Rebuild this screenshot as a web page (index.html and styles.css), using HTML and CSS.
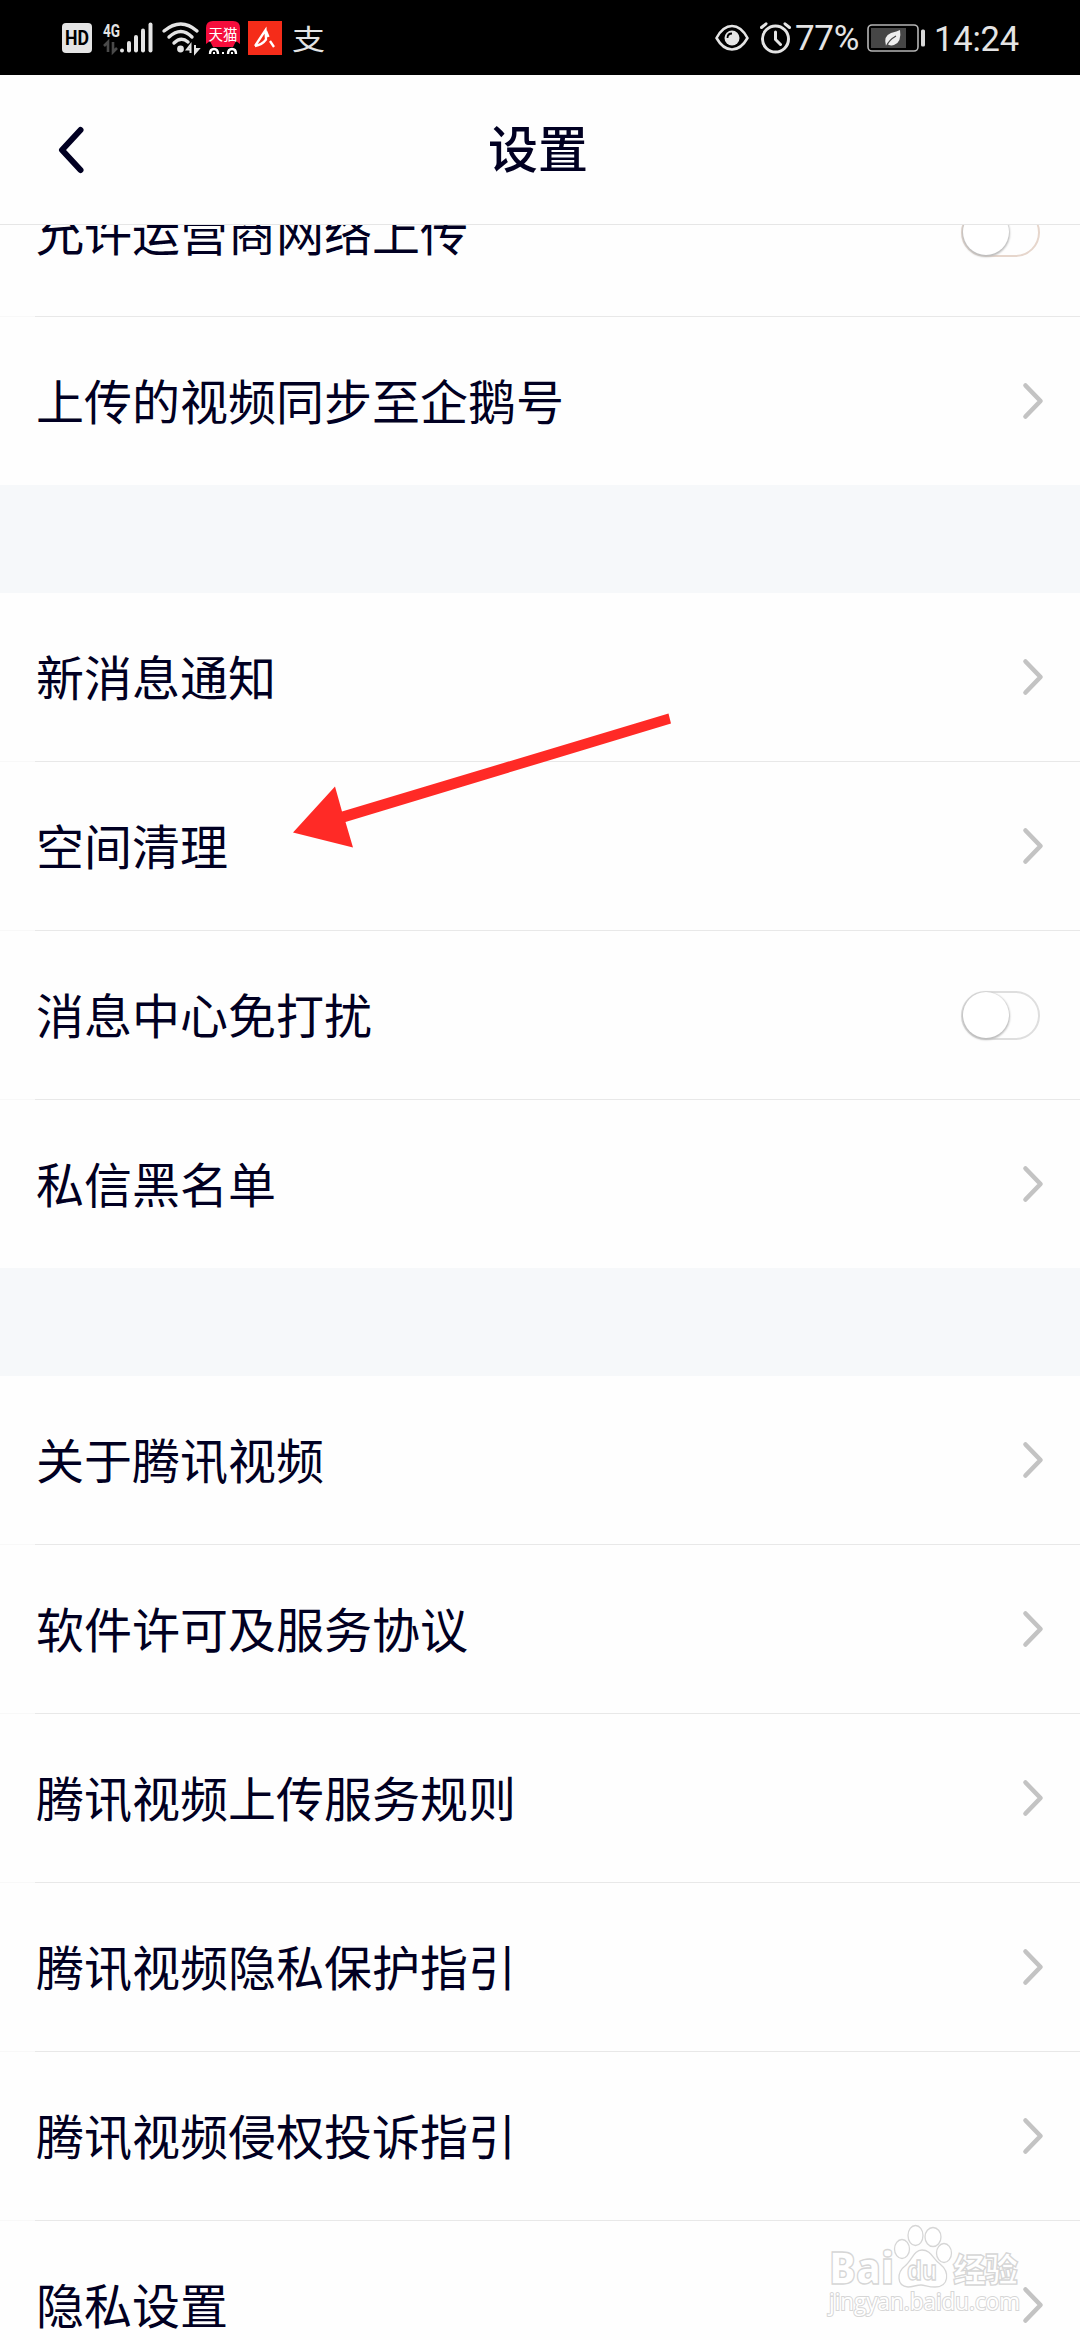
FILE: index.html
```html
<!DOCTYPE html>
<html lang="zh-CN">
<head>
    <meta charset="UTF-8">
    <meta name="viewport" content="width=device-width, initial-scale=1.0">
    <title>设置</title>
    <link rel="stylesheet" href="styles.css">
</head>
<body>
    <svg class="symbols" width="0" height="0">
        <symbol id="chevron" viewBox="0 0 22 38">
            <path d="M3.5 3.5 L18.5 19 L3.5 34.5" fill="none" stroke="#c3c3c3" stroke-width="4.6" stroke-linecap="round" stroke-linejoin="round"/>
        </symbol>
    </svg>

    <div class="status-bar">
        <div class="status-left">
            <svg class="icon-hd" width="30" height="30" viewBox="0 0 30 30">
                <rect width="30" height="30" rx="4" fill="#e4e4e4"/>
                <text x="3" y="22" textLength="24" lengthAdjust="spacingAndGlyphs" class="hd-text">HD</text>
            </svg>
            <svg class="icon-signal" width="50" height="32" viewBox="0 0 50 32">
                <text x="0" y="14.5" textLength="17" lengthAdjust="spacingAndGlyphs" class="net-text">4G</text>
                <path d="M5 30 V20 L1 24 M10 20 V30 L14 26" fill="none" stroke="#4a4a4a" stroke-width="2.6"/>
                <g stroke="#e4e4e4" stroke-width="4" stroke-linecap="round">
                    <path d="M19 28.5 V28.6"/>
                    <path d="M26 21 V28.5"/>
                    <path d="M33 15 V28.5"/>
                    <path d="M40 8.5 V28.5"/>
                    <path d="M47.5 2.5 V28.5"/>
                </g>
            </svg>
            <svg class="icon-wifi" width="38" height="32" viewBox="0 0 38 32">
                <g fill="none" stroke="#e4e4e4" stroke-width="3.4" stroke-linecap="round">
                    <path d="M2 9 Q19 -5 35 9"/>
                    <path d="M7 15 Q19 4 30 15"/>
                    <path d="M12 21 Q19 14 26 20"/>
                </g>
                <circle cx="18.5" cy="27" r="3.4" fill="#e4e4e4"/>
                <path d="M28.5 31 V23 L25 27.5 H28 M33 23 V31 L36.5 27 H33.5" fill="none" stroke="#e4e4e4" stroke-width="2"/>
            </svg>
            <svg class="icon-tmall" width="34" height="34" viewBox="0 0 34 34">
                <path d="M7 0 H27 Q34 0 34 7 V23 L30 20 L27 26 H7 L4 20 L0 23 V7 Q0 0 7 0 Z" fill="#f50d3c"/>
                <text x="2.5" y="18.5" textLength="29" class="tmall-text">天猫</text>
                <path d="M4 33 Q4 28 8 28 Q12 28 12 33 M22 33 Q22 28 26 28 Q30 28 30 33" fill="none" stroke="#fff" stroke-width="2.4"/>
                <path d="M8 31 V33 M26 31 V33 M17 31 V33" stroke="#fff" stroke-width="2"/>
            </svg>
            <svg class="icon-app" width="34" height="34" viewBox="0 0 34 34">
                <rect width="34" height="34" fill="#f52c19"/>
                <path d="M7 25 L17.5 9 L18 18.5 Q14 24 7 25 M18 10 L20.5 16 M22 20 L26 26" fill="none" stroke="#fff" stroke-width="2.3"/>
            </svg>
            <span class="icon-pay">支</span>
        </div>
        <div class="status-right">
            <svg class="icon-eye" width="34" height="28" viewBox="0 0 34 28">
                <path d="M1.5 14 Q8 2 17 2 Q26 2 32.5 14 Q26 25.5 17 25.5 Q8 25.5 1.5 14 Z" fill="none" stroke="#e4e4e4" stroke-width="2.6" stroke-linejoin="round"/>
                <circle cx="17" cy="14" r="7.5" fill="#e4e4e4"/>
                <path d="M12.5 14 Q12.5 9.5 17 9.5" fill="none" stroke="#000" stroke-width="1.8"/>
            </svg>
            <svg class="icon-alarm" width="31" height="32" viewBox="0 0 31 32">
                <circle cx="15.5" cy="17" r="13" fill="none" stroke="#e4e4e4" stroke-width="3"/>
                <path d="M1.5 5.5 L6 1.8 M25 1.8 L29.5 5.5 M15.5 10 V17.5 L20.5 22.5" fill="none" stroke="#e4e4e4" stroke-width="3" stroke-linecap="round"/>
            </svg>
            <span class="battery-text">77%</span>
            <svg class="icon-battery" width="58" height="28" viewBox="0 0 58 28">
                <rect x="1" y="1" width="50" height="26" rx="4" fill="none" stroke="#b5b5b5" stroke-width="1.6"/>
                <rect x="4" y="4" width="35" height="20" fill="#464646"/>
                <path d="M19 22 Q16 12 24 9 Q30 7.5 33 6 Q35 18 27 21 Q24 22 21 20.5 Z" fill="#eee"/>
                <path d="M19.5 22 Q22 16 29 12" fill="none" stroke="#464646" stroke-width="1.2"/>
                <rect x="54" y="5.5" width="4" height="17" rx="1.5" fill="#d8d8d8"/>
            </svg>
            <span class="clock">14:24</span>
        </div>
    </div>

    <header class="header">
        <svg class="back" width="30" height="50" viewBox="0 0 30 50">
            <path d="M24.5 5 L6 25 L24.5 45" fill="none" stroke="#010022" stroke-width="6" stroke-linecap="round" stroke-linejoin="round"/>
        </svg>
        <h1>设置</h1>
    </header>

    <main class="list">
        <section class="group group-scrolled">
            <div class="row"><span>允许运营商网络上传</span><div class="toggle toggle-warm"><i></i></div></div>
            <div class="row"><span>上传的视频同步至企鹅号</span><svg class="arrow"><use href="#chevron"/></svg></div>
        </section>

        <section class="group">
            <div class="row"><span>新消息通知</span><svg class="arrow"><use href="#chevron"/></svg></div>
            <div class="row"><span>空间清理</span><svg class="arrow"><use href="#chevron"/></svg></div>
            <div class="row"><span>消息中心免打扰</span><div class="toggle"><i></i></div></div>
            <div class="row"><span>私信黑名单</span><svg class="arrow"><use href="#chevron"/></svg></div>
        </section>

        <section class="group">
            <div class="row"><span>关于腾讯视频</span><svg class="arrow"><use href="#chevron"/></svg></div>
            <div class="row"><span>软件许可及服务协议</span><svg class="arrow"><use href="#chevron"/></svg></div>
            <div class="row"><span>腾讯视频上传服务规则</span><svg class="arrow"><use href="#chevron"/></svg></div>
            <div class="row"><span>腾讯视频隐私保护指引</span><svg class="arrow"><use href="#chevron"/></svg></div>
            <div class="row"><span>腾讯视频侵权投诉指引</span><svg class="arrow"><use href="#chevron"/></svg></div>
            <div class="row"><span>隐私设置</span><svg class="arrow"><use href="#chevron"/></svg></div>
        </section>
    </main>

    <!-- red pointer over the list -->
    <svg class="pointer" width="380" height="138" viewBox="0 0 380 138">
        <path d="M0 122.5 L42 76.5 L49 101.5 L375.5 3.5 L378 13.5 L52.5 112 L60 137.5 Z" fill="#ff2a26"/>
    </svg>

    <!-- watermark -->
    <svg class="watermark" width="200" height="96" viewBox="0 0 200 96">
        <g fill="#fff" stroke="#d6d6d6" stroke-width="1.3">
            <text x="2" y="61" textLength="65" lengthAdjust="spacingAndGlyphs" class="wm-baidu">Bai</text>
            <ellipse cx="75" cy="26" rx="7.5" ry="9.5"/>
            <ellipse cx="88.5" cy="12.5" rx="7.5" ry="10"/>
            <ellipse cx="106" cy="14" rx="8" ry="9.5"/>
            <ellipse cx="117" cy="30" rx="7.5" ry="9.5"/>
            <path d="M95 27 C104 27 106 36 113 41 C123 49 122 64 108 64 C101 64 98 62 94 62 C89 62 86 64 81 64 C69 63 70 49 78 43 C85 37 87 27 95 27 Z"/>
            <text x="80" y="57" textLength="30" lengthAdjust="spacingAndGlyphs" class="wm-du">du</text>
            <text x="126" y="59" textLength="65" class="wm-cn">经验</text>
            <text x="2" y="87" textLength="191" lengthAdjust="spacingAndGlyphs" class="wm-url">jingyan.baidu.com</text>
        </g>
    </svg>
</body>
</html>
```
FILE: styles.css
```css
* {
    box-sizing: border-box;
}
body {
    font-family: Roboto, "Noto Sans CJK SC", sans-serif;
    margin: 0;
    width: 1080px;
    height: 2340px;
    overflow: hidden;
    position: relative;
    background-color: #fefefe;
    color: #010022;
}
svg {
    display: block;
    flex-shrink: 0;
    overflow: visible;
}
.symbols {
    position: absolute;
}

/* status bar */
.status-bar {
    height: 75px;
    background-color: #000;
    color: #e4e4e4;
    display: flex;
    justify-content: space-between;
    align-items: center;
    padding: 0 61px 0 62px;
}
.status-left,
.status-right {
    display: flex;
    align-items: center;
}
.icon-signal {
    margin-left: 11px;
}
.icon-wifi {
    margin-left: 9px;
}
.icon-tmall {
    margin-left: 6px;
}
.icon-app {
    margin-left: 8px;
}
.icon-pay {
    margin-left: 10px;
    font: 400 33px/40px "Noto Sans CJK SC", sans-serif;
    transform: scaleY(0.86);
}
.hd-text {
    font: bold 20px Roboto, sans-serif;
    fill: #000;
}
.net-text {
    font: bold 19px Roboto, sans-serif;
    fill: #e4e4e4;
}
.tmall-text {
    font: 14.5px "Noto Sans CJK SC", sans-serif;
    fill: #fff;
}
.icon-alarm {
    margin-left: 11px;
}
.battery-text {
    margin-left: 4px;
    font-size: 35px;
    line-height: 40px;
    letter-spacing: -0.3px;
    padding-top: 2px;
}
.icon-battery {
    margin-left: 8px;
}
.clock {
    margin-left: 9px;
    font-size: 34.5px;
    line-height: 40px;
    letter-spacing: -0.2px;
    padding-top: 2px;
}

/* title bar */
.header {
    height: 150px;
    position: relative;
    z-index: 1;
    display: grid;
    grid-template-columns: 56px 1fr 60px;
    align-items: center;
    background-color: #fefefe;
    border-bottom: 1px solid #e6e6e6;
}
.back {
    justify-self: end;
    margin-right: -30px;
}
.header h1 {
    margin: 0;
    padding-top: 3px;
    font-size: 50px;
    font-weight: 500;
    line-height: 72px;
    text-align: center;
}

/* settings list */
.list {
    display: flex;
    flex-direction: column;
    gap: 108px;
    background-color: #f6f8fa;
}
.group {
    background-color: #fefefe;
}
.group-scrolled {
    margin-top: -77px;
}
.row {
    height: 168px;
    display: flex;
    justify-content: space-between;
    align-items: center;
    padding: 0 36px;
    font-size: 48px;
    line-height: 70px;
}
.row span {
    padding-top: 6px;
}
.row + .row {
    height: 169px;
    border-top: 1px solid;
    border-image: linear-gradient(to right, #f8f8f8 36px, #e8e8e8 36px) 1;
}
.arrow {
    width: 22px;
    height: 38px;
}
.toggle {
    width: 79px;
    height: 49px;
    margin-right: 4px;
    border: 2px solid #dedede;
    border-radius: 25px;
}
.toggle-warm {
    border-color: #e6d6cc;
}
.toggle i {
    display: block;
    width: 46px;
    height: 46px;
    margin: -1px 0 0 0;
    border-radius: 50%;
    background-color: #fff;
    box-shadow: 0 1px 2px 1px #bcbcbc;
}

/* overlays */
.pointer {
    position: absolute;
    left: 293px;
    top: 710px;
}
.watermark {
    position: absolute;
    left: 827px;
    top: 2223px;
}
.wm-baidu {
    font: 800 44px "Open Sans", sans-serif;
}
.wm-du {
    font: bold 27px "Liberation Sans", sans-serif;
}
.wm-cn {
    font: 900 33px "Noto Sans CJK SC", sans-serif;
}
.wm-url {
    font: 23px "Open Sans", sans-serif;
    paint-order: stroke;
    stroke-width: 2;
}
```
